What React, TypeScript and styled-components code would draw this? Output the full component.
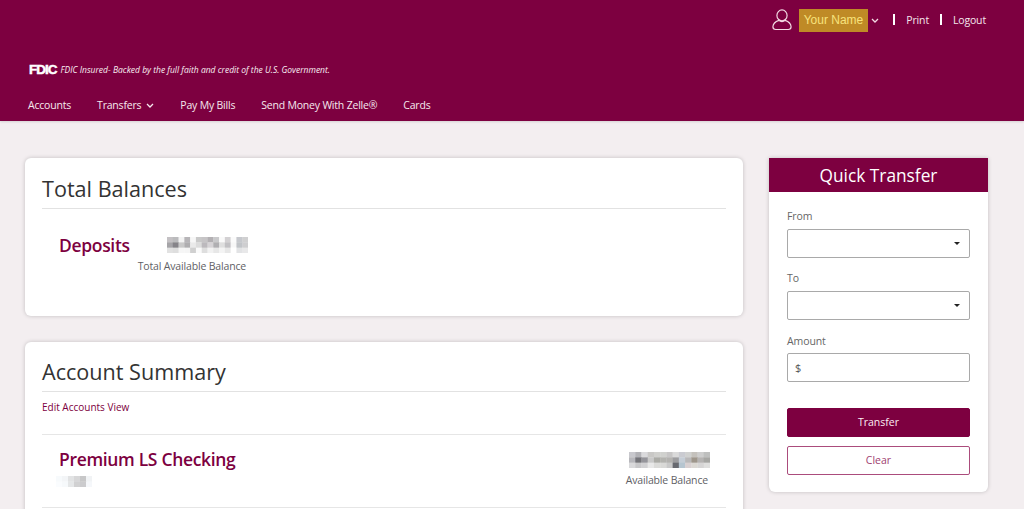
import React from 'react';
import styled, { createGlobalStyle } from 'styled-components';

const maroon = '#7d0040';

const GlobalStyle = createGlobalStyle`
  html, body {
    margin: 0;
    padding: 0;
    height: 509px;
    overflow: hidden;
    background: #f3eef0;
    font-family: "Open Sans", "Liberation Sans", sans-serif;
    color: #333;
  }
  * { box-sizing: border-box; }
`;

const Header = styled.header`
  height: 121px;
  background: ${maroon};
  color: #fff;
  display: flex;
  flex-direction: column;
  box-shadow: 0 1px 2px rgba(0, 0, 0, 0.12);
`;

const TopBar = styled.div`
  height: 40px;
  padding: 6px 38px 0 0;
  display: flex;
  justify-content: flex-end;
  align-items: flex-start;
`;

const UserIcon = styled.svg`
  width: 20px;
  height: 23px;
  margin: 2px 7px 0 0;
`;

const NameBox = styled.div`
  width: 69px;
  height: 23px;
  margin-top: 3px;
  background: #bf8a26;
  color: #f7e27c;
  font-family: "Liberation Sans", sans-serif;
  font-size: 12px;
  line-height: 23px;
  text-align: center;
`;

const Chevron = styled.svg`
  width: 8px;
  height: 5px;
`;

const NameChevron = styled(Chevron)`
  margin: 12px 0 0 3px;
`;

const TopLink = styled.a<{ $width: number; $gap: number }>`
  width: ${(p) => p.$width}px;
  margin: 8px 0 0 ${(p) => p.$gap}px;
  border-left: 2px solid #fff;
  height: 11px;
  font-size: 10.5px;
  letter-spacing: -0.15px;
  line-height: 12px;
  color: #f4e6ec;
  text-align: right;
  white-space: nowrap;
`;

const FdicLine = styled.div`
  margin: 22px 0 0 29px;
  display: flex;
  align-items: center;
  height: 14px;
  gap: 4px;
`;

const FdicMark = styled.span`
  font-family: "Liberation Sans", sans-serif;
  font-weight: 700;
  font-size: 13.5px;
  letter-spacing: -1px;
  -webkit-text-stroke: 0.5px #fff;
`;

const FdicText = styled.span`
  font-size: 8.5px;
  font-style: italic;
  color: #f8eef2;
  white-space: nowrap;
`;

const Nav = styled.nav`
  margin: 21px 0 0 28px;
  display: flex;
  align-items: center;
  gap: 26px;
  font-size: 10.5px;
  letter-spacing: -0.2px;
  height: 16px;
  color: #f6e9ee;
`;

const NavItem = styled.a`
  display: flex;
  align-items: center;
  gap: 5px;
  white-space: nowrap;
`;

const Main = styled.main`
  display: flex;
  align-items: flex-start;
  gap: 26px;
  padding: 37px 0 0 25px;
`;

const Column = styled.div`
  width: 718px;
  display: flex;
  flex-direction: column;
  gap: 26px;
`;

const Card = styled.section<{ $height: number }>`
  height: ${(p) => p.$height}px;
  padding: 17px 17px 0;
  background: #fff;
  border-radius: 6px;
  box-shadow: 0 0 4px rgba(0, 0, 0, 0.2);
`;

const SummaryCard = styled(Card)`
  padding-top: 16px;
`;

const Title = styled.h2`
  margin: 0;
  padding-bottom: 3px;
  height: 34px;
  border-bottom: 1px solid #e2e2e2;
  font-size: 21.6px;
  line-height: 28px;
  font-weight: 400;
  color: #333;
`;

const BalanceRow = styled.div`
  display: flex;
  padding: 24px 0 0 17px;
  align-items: flex-start;
`;

const AccountName = styled.div`
  font-size: 17.5px;
  line-height: 24px;
  font-weight: 600;
  letter-spacing: -0.33px;
  color: ${maroon};
`;

const BalanceCell = styled.div<{ $align: string }>`
  display: flex;
  flex-direction: column;
  align-items: ${(p) => p.$align};
  gap: 5px;
`;

const TotalCell = styled(BalanceCell)`
  margin: 4px 0 0 8px;
  gap: 6px;
`;

const AvailableCell = styled(BalanceCell)`
  margin-top: 4px;
`;

const TotalMosaic = styled.div`
  margin-left: 29px;
`;

const Hint = styled.div`
  font-size: 10.5px;
  line-height: 14px;
  letter-spacing: -0.16px;
  color: #5f5f66;
  white-space: nowrap;
`;

const AvailableHint = styled(Hint)`
  margin-right: 2px;
`;

const EditLink = styled.a`
  display: block;
  height: 43px;
  padding-top: 8px;
  border-bottom: 1px solid #e6e6e6;
  margin-bottom: 13px;
  font-size: 10px;
  line-height: 14px;
  color: ${maroon};
`;

const AccountRow = styled.div`
  display: flex;
  justify-content: space-between;
  height: 60px;
  padding: 0 16px 0 17px;
  border-bottom: 1px solid #e6e6e6;
`;

const AccountLeft = styled.div`
  display: flex;
  flex-direction: column;
  gap: 5px;
  margin-top: -1px;
`;

const AccountMosaic = styled.div`
  margin-left: -3px;
`;

const Side = styled.aside`
  width: 219px;
  height: 334px;
  background: #fff;
  border-radius: 0 0 6px 6px;
  box-shadow: 0 0 4px rgba(0, 0, 0, 0.2);
`;

const SideTitle = styled.div`
  height: 34px;
  background: ${maroon};
  color: #fff;
  font-size: 17.3px;
  line-height: 35px;
  text-align: center;
`;

const Form = styled.form`
  padding: 17px 18px 0;
  display: flex;
  flex-direction: column;
`;

const Label = styled.label`
  font-size: 10.5px;
  line-height: 14px;
  letter-spacing: -0.1px;
  color: #666;
  margin-bottom: 6px;
`;

const AmountLabel = styled(Label)`
  margin-top: 1px;
  margin-bottom: 5px;
`;

const Field = styled.div`
  height: 29px;
  margin-bottom: 13px;
  padding: 0 7px;
  display: flex;
  align-items: center;
  justify-content: space-between;
  border: 1px solid #a9a9a9;
  border-radius: 2px;
  font-size: 11px;
  color: #555;
`;

const Caret = styled.span`
  margin-left: auto;
  margin-right: 2px;
  border-top: 3px solid #222;
  border-left: 3px solid transparent;
  border-right: 3px solid transparent;
`;

const Button = styled.button<{ $primary?: boolean }>`
  height: 29px;
  margin-bottom: 9px;
  padding: 0 0 2px;
  border: 1px solid ${(p) => (p.$primary ? maroon : '#ab4c7c')};
  border-radius: 2px;
  background: ${(p) => (p.$primary ? maroon : '#fff')};
  color: ${(p) => (p.$primary ? '#fbeef3' : '#a0406f')};
  font-family: inherit;
  font-size: 10.5px;
`;

const TransferButton = styled(Button)`
  margin-top: 13px;
`;

const MosaicSvg = styled.svg`
  display: block;
  filter: blur(0.5px) brightness(0.94) contrast(1.2);
`;

// blurred out amounts in the screenshot, greys listed row by row
const Mosaic = ({ cols, w, h, shades }: { cols: number; w: number; h: number; shades: string[] }) => {
  const rows = Math.ceil(shades.length / cols);
  const cw = w / cols;
  const ch = h / rows;
  return (
    <MosaicSvg width={w} height={h} viewBox={`0 0 ${w} ${h}`}>
      {shades.map((s, i) => (
        <rect key={i} x={(i % cols) * cw} y={Math.floor(i / cols) * ch} width={cw + 0.3} height={ch + 0.3} fill={s} />
      ))}
    </MosaicSvg>
  );
};

const depositShades = [
  '#c4c2c4', '#bcbcbe', '#eeeeee', '#b9b7ba', '#f2f2f2', '#c9c9c9', '#c6c4c6', '#b5b3b5', '#c9c9cb', '#f4f4f4', '#d2d0d2', '#f5f5f5', '#c6c8cc', '#cfcfd0',
  '#a9a8ab', '#8d8c90', '#c9c9c9', '#b2b1b3', '#e6e6e6', '#dadada', '#bdbbbe', '#d4d2d4', '#b3b2b4', '#dcdcdc', '#c3c2c4', '#f2f2f2', '#c2c4c8', '#cdcdcf',
  '#dfdfdf', '#dbdbdb', '#f1f1f1', '#f0f0f0', '#cfcfcf', '#f4f4f4', '#dbdbdb', '#ededed', '#e3e3e3', '#efefef', '#e3e3e3', '#fafafa', '#dfe0e2', '#e4e4e5',
];

const balanceShades = [
  '#c8c8cc', '#b4b4b8', '#d8d8da', '#c9c8c6', '#cfcfcc', '#cfd0cd', '#c7c6c6', '#d8d8d8', '#cacbd0', '#cfd0cf', '#c4c2bd', '#cccccc', '#bfc0bf',
  '#b9b9bd', '#7d7d82', '#9b9ba0', '#c9c9c9', '#aeaeaa', '#b5b5b2', '#b5b4b2', '#a2a2a4', '#c5ccd4', '#bbbabb', '#a39c92', '#b7b5b4', '#aaaaa7',
  '#d7d7d9', '#c8c8ca', '#d0d0d2', '#e4e4e4', '#d9d9d7', '#d7d7d5', '#c9c9c9', '#73757a', '#b8c5cf', '#d6cfd0', '#d9d6d2', '#d4d3d3', '#dcdcdb',
];

const accountShades = [
  '#f2f4f6', '#eef0f2', '#dfe0e1', '#d5d5d6', '#c7c7c8', '#eceef0',
  '#f4f6f8', '#f1f3f5', '#e2e3e4', '#d0d0d1', '#cbcbcc', '#f0f2f4',
];

const App = () => (
  <>
    <GlobalStyle />
    <Header>
      <TopBar>
        <UserIcon viewBox="0 0 22 24" fill="none" stroke="#f3dbe4" strokeWidth="1.3">
          <ellipse cx="11" cy="7.5" rx="5.6" ry="6" />
          <path d="M7.5 13 C3.5 14.5 1.2 16.5 1 20 C1 22 2.2 23 4 23 H18 C19.8 23 21 22 21 20 C20.8 16.5 18.5 14.5 14.5 13 C12.5 14.6 9.5 14.6 7.5 13 Z" />
        </UserIcon>
        <NameBox>Your Name</NameBox>
        <NameChevron viewBox="0 0 8 5" fill="none" stroke="#f3dbe4" strokeWidth="1.3">
          <path d="M1 1 L4 4 L7 1" />
        </NameChevron>
        <TopLink $width={36} $gap={14}>Print</TopLink>
        <TopLink $width={46} $gap={11}>Logout</TopLink>
      </TopBar>
      <FdicLine>
        <FdicMark>FDIC</FdicMark>
        <FdicText>FDIC Insured- Backed by the full faith and credit of the U.S. Government.</FdicText>
      </FdicLine>
      <Nav>
        <NavItem>Accounts</NavItem>
        <NavItem>
          Transfers
          <Chevron viewBox="0 0 8 5" fill="none" stroke="#f6e9ee" strokeWidth="1.3">
            <path d="M1 1 L4 4 L7 1" />
          </Chevron>
        </NavItem>
        <NavItem>Pay My Bills</NavItem>
        <NavItem>Send Money With Zelle®</NavItem>
        <NavItem>Cards</NavItem>
      </Nav>
    </Header>
    <Main>
      <Column>
        <Card $height={158}>
          <Title>Total Balances</Title>
          <BalanceRow>
            <AccountName>Deposits</AccountName>
            <TotalCell $align="flex-start">
              <TotalMosaic>
                <Mosaic cols={14} w={81} h={16} shades={depositShades} />
              </TotalMosaic>
              <Hint>Total Available Balance</Hint>
            </TotalCell>
          </BalanceRow>
        </Card>
        <SummaryCard $height={300}>
          <Title>Account Summary</Title>
          <EditLink>Edit Accounts View</EditLink>
          <AccountRow>
            <AccountLeft>
              <AccountName>Premium LS Checking</AccountName>
              <AccountMosaic>
                <Mosaic cols={6} w={36} h={11} shades={accountShades} />
              </AccountMosaic>
            </AccountLeft>
            <AvailableCell $align="flex-end">
              <Mosaic cols={13} w={81} h={16} shades={balanceShades} />
              <AvailableHint>Available Balance</AvailableHint>
            </AvailableCell>
          </AccountRow>
        </SummaryCard>
      </Column>
      <Side>
        <SideTitle>Quick Transfer</SideTitle>
        <Form>
          <Label>From</Label>
          <Field><Caret /></Field>
          <Label>To</Label>
          <Field><Caret /></Field>
          <AmountLabel>Amount</AmountLabel>
          <Field>$</Field>
          <TransferButton type="button" $primary>Transfer</TransferButton>
          <Button type="button">Clear</Button>
        </Form>
      </Side>
    </Main>
  </>
);

export default App;
